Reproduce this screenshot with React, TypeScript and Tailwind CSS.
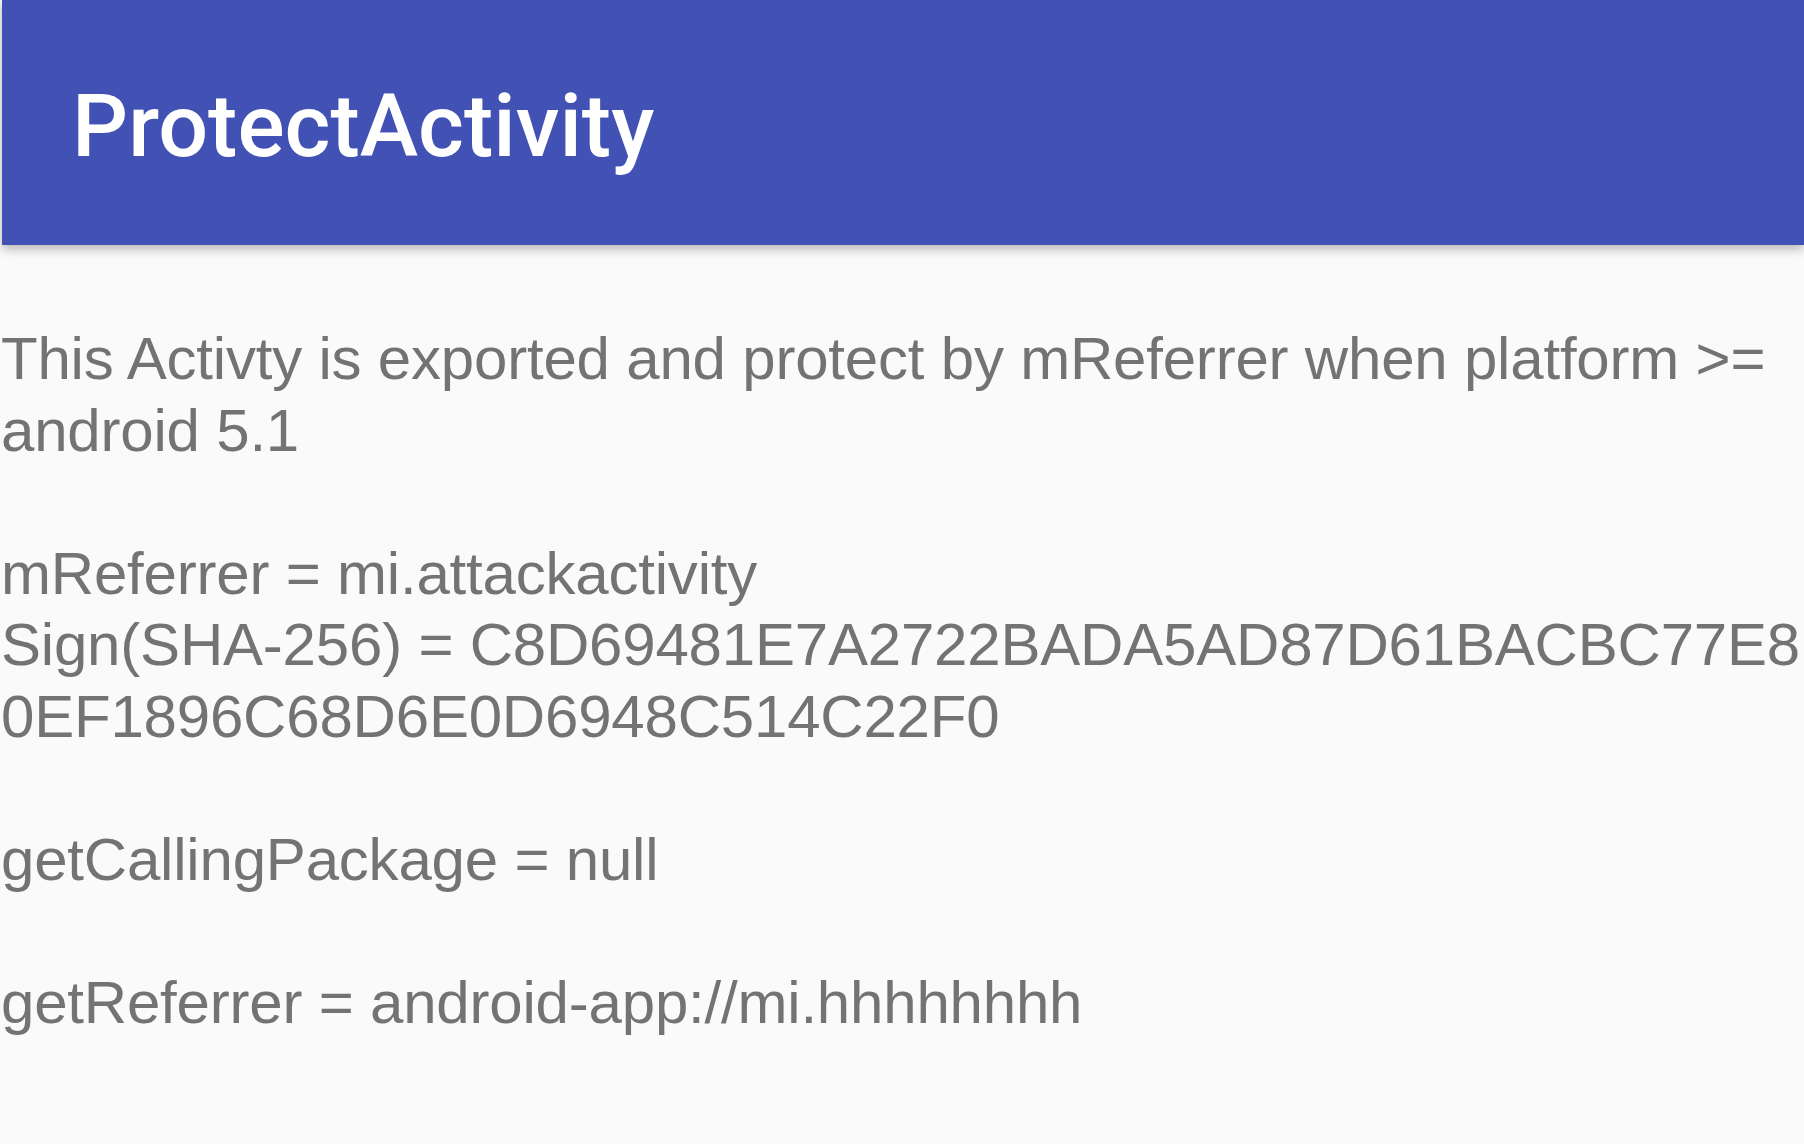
import React from "react";

const lines: string[] = [
  "This Activty is exported and protect by mReferrer when platform >=",
  "android 5.1",
  "",
  "mReferrer = mi.attackactivity",
  "Sign(SHA-256) = C8D69481E7A2722BADA5AD87D61BACBC77E8",
  "0EF1896C68D6E0D6948C514C22F0",
  "",
  "getCallingPackage = null",
  "",
  "getReferrer = android-app://mi.hhhhhhhh",
];

export default function App() {
  return (
    <div className="w-[1804px] h-[1144px] bg-[#fafafa] overflow-hidden flex flex-col">
      <header className="relative z-10 h-[245px] ml-[2px] bg-[#4252b4] shadow-[0_4px_10px_rgba(0,0,0,0.28)] pl-[70px] pt-[82px] shrink-0">
        <h1 className="text-white text-[88px] leading-[88px] font-medium font-['Roboto',sans-serif] tracking-[0px]">
          ProtectActivity
        </h1>
      </header>
      <main className="pt-[78px] pl-[1px] font-['Liberation_Sans',Arial,sans-serif] text-[60px] leading-[71.5px] tracking-[-0.2px] text-[#737373]">
        {lines.map((l, i) => (
          <div key={i} className="whitespace-pre h-[71.5px]">
            {l}
          </div>
        ))}
      </main>
    </div>
  );
}
